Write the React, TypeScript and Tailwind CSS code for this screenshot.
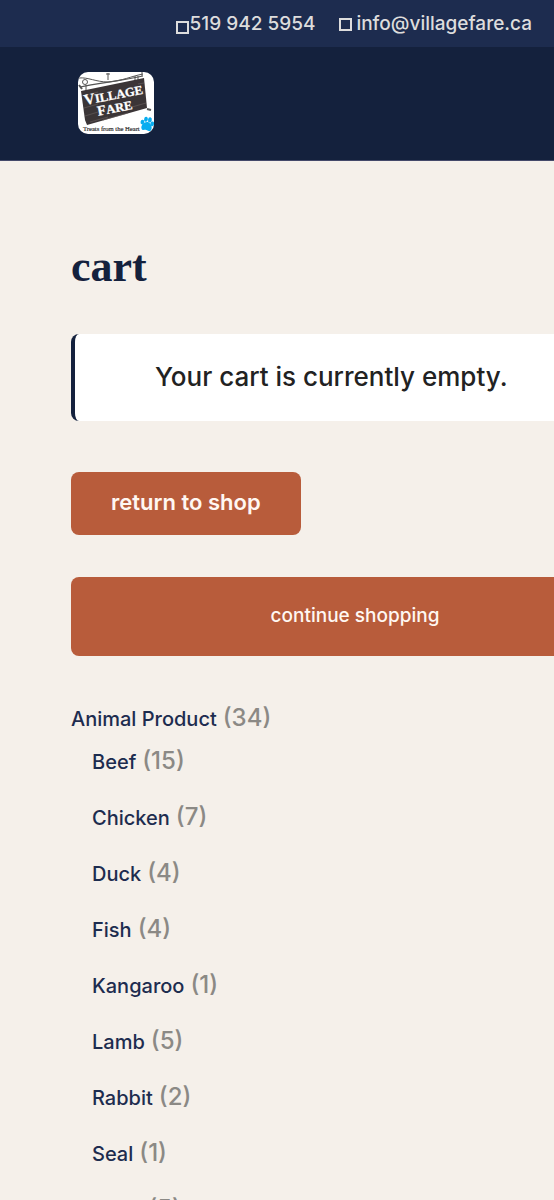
const categories = [
  { name: 'Beef', count: 15 },
  { name: 'Chicken', count: 7 },
  { name: 'Duck', count: 4 },
  { name: 'Fish', count: 4 },
  { name: 'Kangaroo', count: 1 },
  { name: 'Lamb', count: 5 },
  { name: 'Rabbit', count: 2 },
  { name: 'Seal', count: 1 },
  { name: 'Trout', count: 5 },
];

function Logo() {
  return (
    <svg viewBox="0 0 76 62" className="h-[62px] w-[76px] rounded-[10px] bg-white" role="img" aria-label="Village Fare">
      <g fill="none" stroke="#555" strokeWidth="1">
        <path d="M1 6 C10 5 18 10 30 10 C44 9 54 4 65 2" />
        <path d="M2 15 C18 11 44 9 65 4" strokeWidth="1.2" />
        <circle cx="7" cy="10" r="2.5" />
        <path d="M8 13 V19 M60 4 V10 M57 4 V10 M30 1 V8 M28 2 H32 M64 0 V4" />
        <path d="M1 13 L4 17" strokeWidth="2" />
        <path d="M69 37 L73 38" strokeWidth="2" />
      </g>
      <path d="M3 19 L66 6 L69 36 L9 53 L7 48 Z" fill="#3b3537" />
      <g stroke="#69615f" strokeWidth=".6" fill="none">
        <path d="M4 24 L20 20 M6 36 L20 32 M7 44 L20 40 M54 35 L68 31 M60 12 L66 11 M25 48 L50 41 M12 50 L30 45" />
      </g>
      <g transform="rotate(-11 38 30)" fill="#fff" fontFamily="Liberation Serif, serif" fontWeight="700" stroke="#fff" strokeWidth=".3">
        <text x="7" y="27" fontSize="15">V</text>
        <text x="18" y="27" fontSize="12.5">ILLAGE</text>
        <text x="18" y="40" fontSize="14">F</text>
        <text x="27" y="40" fontSize="12.5">ARE</text>
      </g>
      <text x="5" y="59" fontSize="6.6" fill="#333" stroke="#333" strokeWidth=".2" fontFamily="Liberation Serif, serif">Treats from the Heart</text>
      <g fill="#08adf0" transform="rotate(10 69 53)">
        <path d="M69 50 C72 50 75 54 74 57 C73 60 71 58 69 58 C67 58 65 60 64 57 C63 54 66 50 69 50" />
        <ellipse cx="64" cy="51" rx="1.9" ry="2.4" />
        <ellipse cx="67" cy="47.5" rx="1.9" ry="2.6" />
        <ellipse cx="71" cy="47.5" rx="1.9" ry="2.6" />
        <ellipse cx="74" cy="51" rx="1.9" ry="2.4" />
      </g>
    </svg>
  );
}

export default function App() {
  return (
    <div className="min-h-screen overflow-x-hidden bg-[#f5f0ea] font-['Inter',sans-serif] font-medium text-[#222]">
      <div className="flex h-[47px] items-center justify-end gap-6 bg-[#1d2c4f] pt-px pr-[22px] text-[19px] text-[#ddd]">
        <a href="tel:5199425954" className="flex items-center gap-px">
          <span className="mt-[6px] size-[13px] border-2 border-[#ddd]" />
          519 942 5954
        </a>
        <a href="mailto:info@villagefare.ca" className="flex items-center gap-1">
          <span className="size-[13px] border-2 border-[#ddd]" />
          info@villagefare.ca
        </a>
      </div>
      <header className="flex h-[114px] items-center border-b border-[#44496a] bg-[#14213d] pb-[2px] pl-[78px]">
        <a href="/"><Logo /></a>
      </header>
      <main className="-mr-[85px] pl-[71px] pt-20">
        <h1 className="font-['Liberation_Serif',serif] text-[44px] leading-[52px] font-bold text-[#14213d]">cart</h1>
        <div className="mt-[41px] flex h-[87px] items-center rounded-lg border-l-4 border-[#14213d] bg-white pb-[2px] pl-20 text-[26px]">
          Your cart is currently empty.
        </div>
        <a href="/shop" className="mt-[51px] flex h-[63px] w-fit items-center rounded-lg bg-[#b85c3b] px-10 pb-[2px] text-[22px] font-semibold text-[#fff7f2]">
          return to shop
        </a>
        <a href="/shop" className="mt-[42px] flex h-[79px] items-center justify-center rounded-lg bg-[#b85c3b] text-[19px] text-[#fff7f2]">
          continue shopping
        </a>
        <nav className="pt-[46px]" aria-label="Product categories">
          <div className="flex h-8 items-baseline gap-[6px]">
            <a href="/animal-product" className="text-xl leading-8 text-[#1d2c4f]">Animal Product</a>
            <span className="text-2xl leading-8 text-[#8b8985]">(34)</span>
          </div>
          <ul className="pl-[21px] pt-[11px]">
            {categories.map((c) => (
              <li key={c.name} className="flex h-14 items-baseline gap-[6px]">
                <a href={'/' + c.name.toLowerCase()} className="text-xl leading-8 text-[#1d2c4f]">{c.name}</a>
                <span className="text-2xl leading-8 text-[#8b8985]">({c.count})</span>
              </li>
            ))}
          </ul>
        </nav>
      </main>
    </div>
  );
}
